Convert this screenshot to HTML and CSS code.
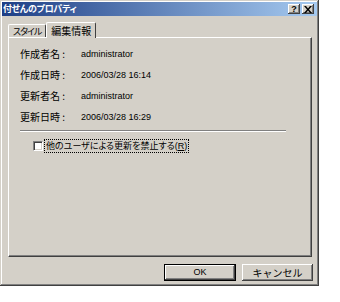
FILE: index.html
```html
<!DOCTYPE html>
<html lang="ja">
<head>
    <meta charset="UTF-8">
    <title>付せんのプロパティ</title>
    <link rel="stylesheet" href="styles.css">
</head>
<body>
    <div class="window">
        <div class="title-bar">
            <span class="title">付せんのプロパティ</span>
            <div class="title-buttons">
                <span class="title-btn">?</span>
                <span class="title-btn close">
                    <svg width="8" height="7" viewBox="0 0 8 7"><path d="M0 0h2l2 2.5 2-2.5h2L5 3.5 8 7H6L4 4.5 2 7H0l3-3.5z" fill="#000"/></svg>
                </span>
            </div>
        </div>

        <div class="tabs">
            <div class="tab">スタイル</div>
            <div class="tab active">編集情報</div>
        </div>

        <div class="panel">
            <div class="row"><span class="label">作成者名 :</span><span class="value">administrator</span></div>
            <div class="row"><span class="label">作成日時 :</span><span class="value">2006/03/28 16:14</span></div>
            <div class="row"><span class="label">更新者名 :</span><span class="value">administrator</span></div>
            <div class="row"><span class="label">更新日時 :</span><span class="value">2006/03/28 16:29</span></div>
            <div class="separator"></div>
            <label class="check-row">
                <span class="checkbox"></span>
                <span class="check-label">他のユーザによる更新を禁止する<span class="key">(<u>R</u>)</span></span>
            </label>
        </div>

        <div class="buttons">
            <button class="btn default">OK</button>
            <button class="btn">キャンセル</button>
        </div>
    </div>
</body>
</html>
```

FILE: styles.css
```css
body {
    margin: 0;
    background: #fff;
    font-family: "Noto Sans CJK JP", "Liberation Sans", sans-serif;
    font-feature-settings: "palt";
    font-size: 10px;
    color: #000;
}
.window {
    width: 319px;
    height: 286px;
    box-sizing: border-box;
    padding: 2px;
    background: #d4d0c8;
    box-shadow: inset -1px -1px #404040, inset 1px 1px #d4d0c8,
                inset -2px -2px #808080, inset 2px 2px #fff;
}
.title-bar {
    height: 14px;
    display: flex;
    align-items: center;
    justify-content: space-between;
    padding: 0 3px 0 1px;
    background: linear-gradient(to right, #1e3f86, #a6caf0);
}
.title {
    color: #fff;
    font-weight: bold;
    font-size: 9px;
    line-height: 14px;
    letter-spacing: -0.3px;
}
.title-buttons {
    display: flex;
    gap: 2px;
}
.title-btn {
    width: 12px;
    height: 10px;
    box-sizing: border-box;
    display: flex;
    align-items: center;
    justify-content: center;
    background: #d4d0c8;
    box-shadow: inset -1px -1px #404040, inset 1px 1px #fff, inset -2px -2px #808080;
    font-family: "Liberation Sans", sans-serif;
    font-weight: bold;
    font-size: 9px;
    line-height: 10px;
}
.tabs {
    display: flex;
    align-items: flex-end;
    height: 16px;
    margin-top: 5px;
    padding-left: 6px;
}
.tab {
    height: 13px;
    box-sizing: border-box;
    padding: 0 4px;
    line-height: 13px;
    font-size: 9px;
    letter-spacing: -1px;
    border: 1px solid #fff;
    border-bottom: none;
    border-right-color: #404040;
    border-radius: 2px 2px 0 0;
}
.tab.active {
    height: 16px;
    line-height: 15px;
    font-size: 10px;
    letter-spacing: 0;
    padding: 0 4px;
    margin-bottom: -1px;
    position: relative;
    background: #d4d0c8;
    border-left-color: #fff;
}
.panel {
    width: 304px;
    height: 220px;
    box-sizing: border-box;
    margin-left: 6px;
    padding: 5px 0 0 11px;
    border: 1px solid #fff;
    border-right-color: #404040;
    border-bottom-color: #404040;
    box-shadow: inset -1px -1px #808080;
}
.row {
    display: flex;
    align-items: center;
    height: 21px;
}
.label {
    width: 61px;
    font-size: 10px;
}
.value {
    font-family: "Liberation Sans", sans-serif;
    font-size: 9px;
}
.separator {
    width: 266px;
    height: 1px;
    margin-top: 3px;
    background: #808080;
    border-bottom: 1px solid #fff;
}
.check-row {
    display: flex;
    align-items: center;
    height: 14px;
    margin-top: 7px;
    padding-left: 13px;
}
.checkbox {
    width: 10px;
    height: 10px;
    box-sizing: border-box;
    background: #fff;
    border: 1px solid #808080;
    border-right-color: #fff;
    border-bottom-color: #fff;
    box-shadow: inset 1px 1px #404040, inset -1px -1px #d4d0c8;
}
.check-label {
    margin-left: 2px;
    padding: 0 1px;
    line-height: 12px;
    outline: 1px dotted #000;
    font-size: 9px;
}
.key {
    font-family: "Liberation Sans", sans-serif;
    font-size: 9px;
}
.buttons {
    display: flex;
    justify-content: flex-end;
    gap: 6px;
    margin-top: 7px;
    padding-right: 4px;
}
.btn {
    width: 71px;
    height: 17px;
    padding: 0;
    font-family: inherit;
    font-size: 10px;
    line-height: 15px;
    background: #d4d0c8;
    border: none;
    box-shadow: inset -1px -1px #404040, inset 1px 1px #fff, inset -2px -2px #808080;
}
.btn.default {
    width: 72px;
    font-family: "Liberation Sans", sans-serif;
    font-size: 9px;
    box-shadow: inset 0 0 0 1px #000, inset -2px -2px #404040, inset 2px 2px #fff, inset -3px -3px #808080;
}
```
